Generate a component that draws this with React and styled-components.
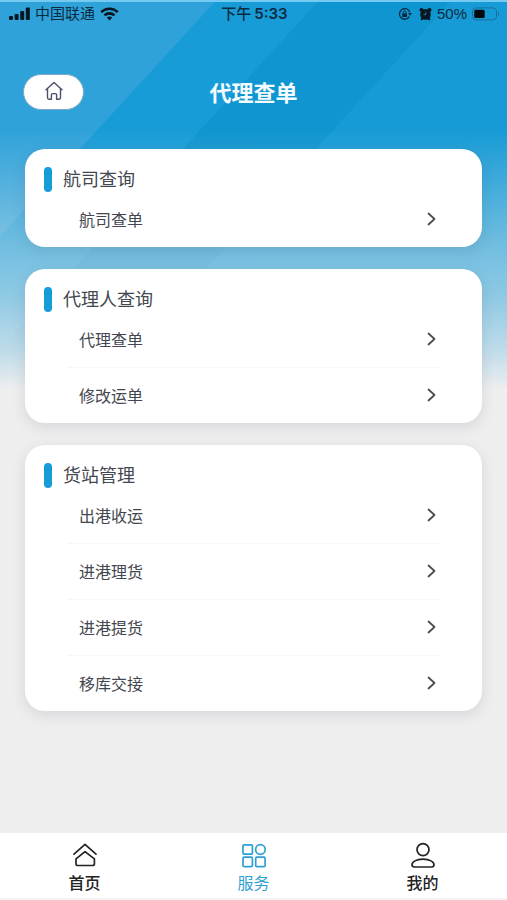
import React from "react";
import styled, { createGlobalStyle } from "styled-components";

const GlobalStyle = createGlobalStyle`
  *, *::before, *::after { box-sizing: border-box; }
  body {
    margin: 0;
    background: #eeeeef;
    color: #43474f;
    font-family: "Noto Sans CJK SC", "Noto Sans", sans-serif;
  }
  button { font: inherit; color: inherit; }
  svg { display: block; flex: none; }
`;

const Screen = styled.div`
  display: flex;
  flex-direction: column;
  min-height: 100vh;
  background:
    linear-gradient(
      180deg,
      rgba(238, 238, 239, 0) 130px,
      rgba(238, 238, 239, 0.4) 240px,
      rgba(238, 238, 239, 0.55) 295px,
      rgba(238, 238, 239, 0.78) 350px,
      #eeeeef 390px
    ),
    linear-gradient(
      132.5deg,
      #2fa2da 159px,
      #189cd7 160px,
      #189cd7 235px,
      #0f95cf 236px,
      #0f95cf 333px,
      #179bd6 334px
    );
`;

const StatusBar = styled.div`
  display: grid;
  grid-template-columns: 1fr auto 1fr;
  align-items: center;
  height: 26px;
  padding: 0 7px 0 9px;
  border-top: 2px solid #74caf0;
  color: #0b2c40;
  font-size: 15px;
  line-height: 24px;
`;

const StatusGroup = styled.div`
  display: flex;
  align-items: center;
  justify-content: ${(p) => (p.$end ? "flex-end" : "flex-start")};
  gap: 5px;
  font-family: "Liberation Sans", "Noto Sans CJK SC", sans-serif;
`;

const StatusIcons = styled.div`
  display: flex;
  align-items: center;
  gap: 7px;
`;

const Clock = styled.time`
  display: flex;
  gap: 3px;
  font-family: Inter, "Noto Sans CJK SC", sans-serif;
  font-weight: 500;
`;

const ClockDigits = styled.span`
  font-weight: 600;
`;

const Header = styled.header`
  display: grid;
  grid-template-columns: 1fr auto 1fr;
  align-items: center;
  height: 36px;
  margin: 48px 23px 39px;
`;

const HomeButton = styled.button`
  display: flex;
  align-items: center;
  justify-content: center;
  width: 61px;
  height: 36px;
  padding: 0 0 2px;
  border: 1px solid #7fa9c8;
  border-radius: 18px;
  background: #fff;
  color: #4c4f6b;
`;

const PageTitle = styled.h1`
  margin: 0;
  padding-bottom: 2px;
  color: #f4fcff;
  font-size: 22px;
  font-weight: 700;
  line-height: 32px;
`;

const Main = styled.main`
  display: flex;
  flex: 1;
  flex-direction: column;
  gap: 22px;
  padding: 0 25px 22px;
`;

const Card = styled.section`
  padding: 18px 42px 0 19px;
  border-radius: 20px;
  background: #fff;
  box-shadow: 0 4px 14px rgba(60, 60, 80, 0.13);
`;

const CardTitle = styled.h2`
  display: flex;
  align-items: flex-start;
  gap: 11px;
  height: 25px;
  margin: 0;
  font-size: 18px;
  font-weight: 400;
  line-height: 22px;

  &::before {
    width: 8px;
    height: 25px;
    border-radius: 4px;
    background: #189cd7;
    content: "";
  }
`;

const List = styled.ul`
  margin: 0;
  padding: 0 0 0 24px;
  list-style: none;
`;

const Item = styled.li`
  & + & {
    border-top: 1px solid #f7f7f8;
  }
`;

const ItemButton = styled.button`
  display: flex;
  align-items: center;
  justify-content: space-between;
  width: 100%;
  height: 55px;
  padding: 0 4px 2px 11px;
  border: 0;
  background: none;
  font-size: 16px;
  line-height: 24px;
`;

const TabBar = styled.nav`
  position: sticky;
  bottom: 0;
  display: grid;
  grid-template-columns: repeat(3, 1fr);
  height: 67px;
  border-bottom: 2px solid #f3f3f4;
  background: #fff;
`;

const Tab = styled.button`
  display: flex;
  flex-direction: column;
  align-items: center;
  gap: 2px;
  padding: 9px 0 0;
  border: 0;
  background: none;
  color: ${(p) => (p.$active ? "#2d9fd3" : "#222")};
  font-size: 16px;
  font-weight: ${(p) => (p.$active ? 400 : 500)};
  line-height: 24px;
`;

const SignalIcon = () => (
  <svg width="21" height="14" viewBox="0 0 21 14" fill="#061722" aria-hidden="true">
    <rect x="0" y="9" width="4" height="4" rx="1" />
    <rect x="5.6" y="7" width="4" height="6" rx="1" />
    <rect x="11.2" y="4" width="4" height="9" rx="1" />
    <rect x="16.8" y="0.5" width="4" height="12.5" rx="1" />
  </svg>
);

const WifiIcon = () => (
  <svg width="19" height="14" viewBox="0 0 19 14" fill="none" stroke="#061722" strokeWidth="2.6" aria-hidden="true">
    <path d="M1.2 5.2C5.8.6 13.2.6 17.8 5.2" />
    <path d="M4.5 8.4C7.3 5.7 11.7 5.7 14.5 8.4" />
    <path d="M9.5 13.6 6.8 10.6C8.3 9.2 10.7 9.2 12.2 10.6Z" fill="#061722" stroke="none" />
  </svg>
);

const RotationLockIcon = () => (
  <svg width="14" height="14" viewBox="0 0 14 14" fill="none" stroke="#0b2c40" strokeWidth="1.3" aria-hidden="true">
    <path d="M11.3 9.7A5.3 5.3 0 1 1 11.8 5.2" />
    <path d="M10 6.1h4l-2 2.7Z" fill="#0b2c40" stroke="none" />
    <rect x="4.2" y="6.3" width="4.8" height="3.6" rx="0.5" fill="#0b2c40" stroke="none" />
    <path d="M5.2 6.5V5.3a1.4 1.4 0 0 1 2.8 0v1.2" strokeWidth="1" />
  </svg>
);

const AlarmIcon = () => (
  <svg width="13" height="14" viewBox="0 0 13 14" aria-hidden="true">
    <g fill="#061722">
      <circle cx="6.5" cy="7.4" r="5.3" />
      <circle cx="2.5" cy="2.9" r="2" />
      <circle cx="10.5" cy="2.9" r="2" />
      <path d="m2.6 10.5 2 1.6-1.7 1.3-1.3-.9ZM10.4 10.5l-2 1.6 1.7 1.3 1.3-.9Z" />
    </g>
    <path d="M6.8 5v2.7H4.6" fill="none" stroke="#2b8fc0" strokeWidth="0.8" />
  </svg>
);

const BatteryIcon = () => (
  <svg width="28" height="14" viewBox="0 0 28 14" aria-hidden="true">
    <rect x="0.5" y="0.9" width="24" height="12" rx="3.4" fill="none" stroke="#176f9e" />
    <rect x="2.2" y="2.7" width="10.5" height="8.4" rx="1.5" fill="#030a0f" />
    <path d="M26 5c1.6.5 1.6 3.5 0 4Z" fill="#176f9e" />
  </svg>
);

const HouseIcon = () => (
  <svg width="18" height="20" viewBox="0 0 18 20" fill="none" stroke="currentColor" strokeWidth="1.4" strokeLinecap="round" strokeLinejoin="round" aria-hidden="true">
    <path d="M1 8.8 9 1.6l8 7.2" />
    <path d="M2.5 7.7v9.1q0 1.4 1.4 1.4h2.5v-4.4q0-1.2 1.2-1.2h2.8q1.2 0 1.2 1.2v4.4h2.5q1.4 0 1.4-1.4V7.7" />
  </svg>
);

const ChevronIcon = () => (
  <svg width="9" height="14" viewBox="0 0 9 14" fill="none" stroke="#4a4a4c" strokeWidth="1.7" strokeLinecap="round" strokeLinejoin="round" aria-hidden="true">
    <path d="m1.5 1.5 6 5.5-6 5.5" />
  </svg>
);

const TabIcon = ({ children }) => (
  <svg width="26" height="26" viewBox="0 0 26 26" fill="none" stroke="currentColor" strokeWidth="1.7" strokeLinecap="round" strokeLinejoin="round" aria-hidden="true">
    {children}
  </svg>
);

const groups = [
  { title: "航司查询", items: ["航司查单"] },
  { title: "代理人查询", items: ["代理查单", "修改运单"] },
  { title: "货站管理", items: ["出港收运", "进港理货", "进港提货", "移库交接"] },
];

const tabs = [
  {
    label: "首页",
    icon: (
      <>
        <path d="M2 12.2 13 2.4 24 12.2" />
        <path d="M4 16.8 13 9.6 22.4 16.8v4.9q0 1.8-1.8 1.8H5.8Q4 23.5 4 21.7Z" />
      </>
    ),
  },
  {
    label: "服务",
    active: true,
    icon: (
      <>
        <rect x="2" y="2.8" width="9.4" height="9.4" rx="1.2" />
        <circle cx="19.4" cy="7.5" r="4.8" />
        <rect x="2" y="15.2" width="9.4" height="9.4" rx="1.2" />
        <rect x="14.7" y="15.2" width="9.4" height="9.4" rx="1.2" />
      </>
    ),
  },
  {
    label: "我的",
    icon: (
      <>
        <circle cx="13" cy="7.6" r="6" />
        <path d="M4.5 25C2.6 25 2 24.2 2 22.8c0-3 4.2-5.6 11-5.6s11 2.6 11 5.6c0 1.4-.6 2.2-2.5 2.2Z" />
      </>
    ),
  },
];

export default function App() {
  return (
    <>
      <GlobalStyle />
      <Screen>
        <StatusBar>
          <StatusGroup>
            <SignalIcon />
            <span>中国联通</span>
            <WifiIcon />
          </StatusGroup>
          <Clock>
            <span>下午</span>
            <ClockDigits>5:33</ClockDigits>
          </Clock>
          <StatusGroup $end>
            <StatusIcons>
              <RotationLockIcon />
              <AlarmIcon />
            </StatusIcons>
            <span>50%</span>
            <BatteryIcon />
          </StatusGroup>
        </StatusBar>
        <Header>
          <HomeButton type="button" aria-label="首页">
            <HouseIcon />
          </HomeButton>
          <PageTitle>代理查单</PageTitle>
        </Header>
        <Main>
          {groups.map((group) => (
            <Card key={group.title}>
              <CardTitle>{group.title}</CardTitle>
              <List>
                {group.items.map((item) => (
                  <Item key={item}>
                    <ItemButton type="button">
                      {item}
                      <ChevronIcon />
                    </ItemButton>
                  </Item>
                ))}
              </List>
            </Card>
          ))}
        </Main>
        <TabBar>
          {tabs.map((tab) => (
            <Tab key={tab.label} type="button" $active={tab.active} aria-current={tab.active ? "page" : undefined}>
              <TabIcon>{tab.icon}</TabIcon>
              {tab.label}
            </Tab>
          ))}
        </TabBar>
      </Screen>
    </>
  );
}
